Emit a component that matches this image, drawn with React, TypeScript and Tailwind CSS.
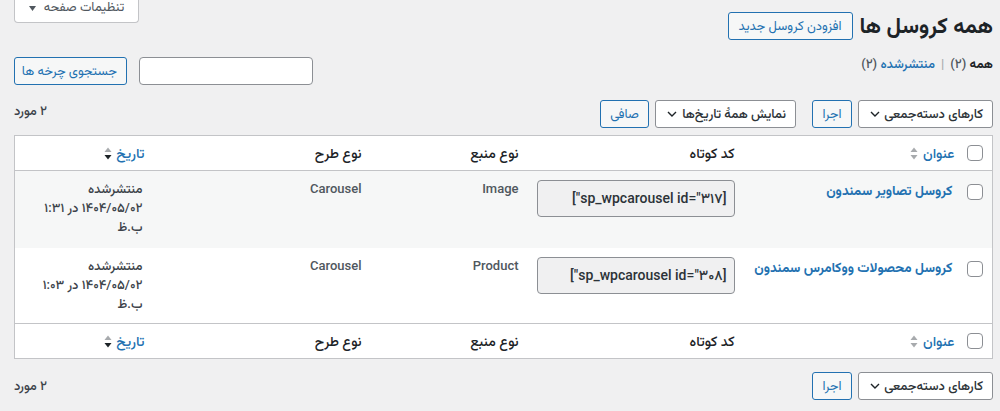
import React from 'react';

const SortArrows: React.FC<{ desc?: boolean }> = ({ desc }) => (
  <svg width="8" height="13" viewBox="0 0 8 13" className="inline-block">
    <path d="M4 0.5 L7.5 5 H0.5Z" fill="#a7aaad" />
    <path d="M0.5 8 H7.5 L4 12.5Z" fill={desc ? '#1d2327' : '#a7aaad'} />
  </svg>
);

const Chevron: React.FC = () => (
  <svg width="10" height="6" viewBox="0 0 10 6">
    <path d="M1 1l4 4 4-4" stroke="#1d2327" strokeWidth="1.4" fill="none" />
  </svg>
);

const Select: React.FC<{ label: string; width: string }> = ({ label, width }) => (
  <div
    className={`${width} h-[28px] bg-white border border-[#8c8f94] rounded-[3px] flex items-center justify-between pr-[9px] pl-[11px] text-[13px] text-[#2c3338] whitespace-nowrap`}
  >
    <span>{label}</span>
    <Chevron />
  </div>
);

const SecondaryButton: React.FC<{ label: string; className?: string }> = ({ label, className = '' }) => (
  <button
    className={`h-[28px] px-[9px] bg-[#f6f7f7] border border-[#2271b1] rounded-[3px] text-[#2271b1] text-[13px] font-normal whitespace-nowrap ${className}`}
  >
    {label}
  </button>
);

const Checkbox: React.FC = () => (
  <span className="block w-[16px] h-[16px] bg-white border border-[#8c8f94] rounded-[4px]" />
);

type Row = {
  title: string;
  shortcode: string;
  source: string;
  layout: string;
  time: string;
};

const rows: Row[] = [
  {
    title: 'کروسل تصاویر سمندون',
    shortcode: '[sp_wpcarousel id="۳۱۷"]',
    source: 'Image',
    layout: 'Carousel',
    time: '۱۴۰۴/۰۵/۰۲ در ۱:۳۱',
  },
  {
    title: 'کروسل محصولات ووکامرس سمندون',
    shortcode: '[sp_wpcarousel id="۳۰۸"]',
    source: 'Product',
    layout: 'Carousel',
    time: '۱۴۰۴/۰۵/۰۲ در ۱:۰۳',
  },
];

const HeaderCells: React.FC = () => (
  <>
    <th className="h-[35px] pr-[9px] align-middle">
      <Checkbox />
    </th>
    <th className="pr-[4px] text-right font-medium align-middle">
      <span className="inline-flex items-center gap-[5px] text-[#2271b1]">
        عنوان
        <SortArrows />
      </span>
    </th>
    <th className="pr-[10px] text-right font-medium align-middle text-[#1d2327]">کد کوتاه</th>
    <th className="pr-[10px] text-right font-medium align-middle text-[#1d2327]">نوع منبع</th>
    <th className="pr-[10px] text-right font-medium align-middle text-[#1d2327]">نوع طرح</th>
    <th className="pr-[10px] text-right font-medium align-middle">
      <span className="inline-flex items-center gap-[4px] text-[#2271b1]">
        تاریخ
        <SortArrows desc />
      </span>
    </th>
  </>
);

const App: React.FC = () => {
  return (
    <div
      dir="rtl"
      className="min-h-screen bg-[#f0f0f1] text-[#3c434a] text-[13px] font-medium font-['Roboto','Vazirmatn',sans-serif] pr-[7px] pl-[14px]"
    >
      {/* header */}
      <div className="flex justify-between items-start">
        <div className="flex items-center gap-[7px] mt-[11px]">
          <h1 className="text-[22px] leading-[30px] font-bold text-[#1d2327] whitespace-nowrap">همه کروسل ها</h1>
          <SecondaryButton label="افزودن کروسل جدید" className="h-[27px] px-[10px]" />
        </div>
        <div className="w-[125px] h-[23px] bg-white border border-t-0 border-[#c3c4c7] rounded-b-[4px] flex items-start justify-center gap-[8px] text-[#50575e] text-[13px] font-normal leading-[14px]">
          <span>تنظیمات صفحه</span>
          <svg width="7" height="5" viewBox="0 0 7 5" className="mt-[6px]">
            <path d="M0 0 H7 L3.5 5Z" fill="#50575e" />
          </svg>
        </div>
      </div>

      {/* views + search */}
      <div className="flex justify-between items-start mt-[16px]">
        <div className="text-[13px] leading-[14px] whitespace-nowrap">
          <span className="font-bold text-[#1d2327]">همه</span> <span className="text-[#50575e]">(۲)</span>
          <span className="text-[#a7aaad] mx-[6px]">|</span>
          <span className="text-[#2271b1]">منتشرشده</span> <span className="text-[#50575e]">(۲)</span>
        </div>
        <div className="flex items-center gap-[12px]">
          <div className="w-[174px] h-[28px] bg-white border border-[#8c8f94] rounded-[4px]" />
          <SecondaryButton label="جستجوی چرخه ها" className="w-[113px]" />
        </div>
      </div>

      {/* top tablenav */}
      <div className="flex justify-between items-start mt-[15px]">
        <div className="flex items-center">
          <div className="flex items-center gap-[6px]">
            <Select label="کارهای دسته‌جمعی" width="w-[135px]" />
            <SecondaryButton label="اجرا" className="w-[40px]" />
          </div>
          <div className="flex items-center gap-[6px] mr-[16px]">
            <Select label="نمایش همهٔ تاریخ‌ها" width="w-[141px]" />
            <SecondaryButton label="صافی" className="w-[49px]" />
          </div>
        </div>
        <div className="pt-[1px] text-[13px] text-[#3c434a]">۲ مورد</div>
      </div>

      {/* table */}
      <table className="w-full table-fixed mt-[7px] bg-white border border-[#c3c4c7] border-collapse text-[13px]">
        <colgroup>
          <col className="w-[34px]" />
          <col className="w-[214px]" />
          <col className="w-[216px]" />
          <col className="w-[157px]" />
          <col className="w-[217px]" />
          <col />
        </colgroup>
        <thead>
          <tr className="border-b border-[#c3c4c7] text-[14px]">
            <HeaderCells />
          </tr>
        </thead>
        <tbody>
          {rows.map((r, i) => (
            <tr key={r.shortcode} className={i % 2 === 0 ? 'bg-[#f6f7f7] h-[77px]' : 'bg-white h-[76px]'}>
              <td className="align-top pr-[9px] pt-[13px]">
                <Checkbox />
              </td>
              <td className="align-top pr-[6px] pt-[9px] whitespace-nowrap">
                <span className="font-bold text-[13.5px] text-[#2271b1]">{r.title}</span>
              </td>
              <td className="align-top pr-[10px] pt-[9px]">
                <div className="w-[198px] h-[37px] bg-[#f0f0f1] border border-[#8c8f94] rounded-[4px] flex items-center pr-[7px] text-[14px] text-[#2c3338] whitespace-nowrap">
                  {r.shortcode}
                </div>
              </td>
              <td className="align-top pr-[10px] pt-[8px] text-[#50575e]">{r.source}</td>
              <td className="align-top pr-[10px] pt-[8px] text-[#50575e]">{r.layout}</td>
              <td className="align-top pr-[12px] pt-[8px] leading-[19px] whitespace-nowrap">
                منتشرشده
                <br />
                {r.time}
                <br />
                ب.ظ
              </td>
            </tr>
          ))}
        </tbody>
        <tfoot>
          <tr className="border-t border-[#c3c4c7] text-[14px]">
            <HeaderCells />
          </tr>
        </tfoot>
      </table>

      {/* bottom tablenav */}
      <div className="flex justify-between items-start mt-[13px]">
        <div className="flex items-center gap-[6px]">
          <Select label="کارهای دسته‌جمعی" width="w-[135px]" />
          <SecondaryButton label="اجرا" className="w-[40px]" />
        </div>
        <div className="pt-[4px] text-[13px] text-[#3c434a]">۲ مورد</div>
      </div>
    </div>
  );
};

export default App;
